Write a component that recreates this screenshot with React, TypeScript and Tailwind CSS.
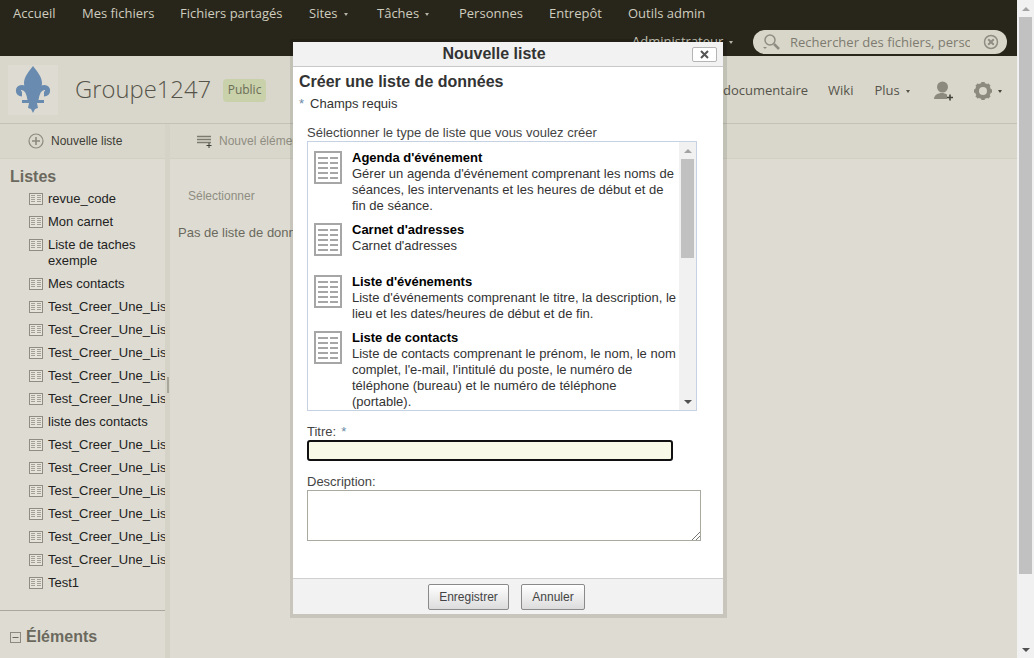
import React from "react";

const Caret = ({ c = "border-t-[#b5b3a7]" }: { c?: string }) => (
  <span className={`inline-block ml-[6px] align-middle w-0 h-0 border-x-[2.5px] border-x-transparent border-t-[3px] ${c}`} />
);

const ListIcon = () => (
  <svg width="14" height="12" viewBox="0 0 14 12" className="shrink-0">
    <rect x="0.5" y="0.5" width="13" height="11" fill="#e6e4da" stroke="#8f8d83" />
    <path d="M2 2.500h4M8 2.500h4M2 4.500h4M8 4.500h4M2 6.500h4M8 6.500h4M2 8.500h4M8 8.500h4" stroke="#a3a197" strokeWidth="1" />
  </svg>
);

const TypeIcon = () => (
  <svg width="28" height="33" viewBox="0 0 28 33" className="shrink-0 mt-[1px]">
    <rect x="1" y="1" width="26" height="31" fill="#fff" stroke="#a6a6a6" strokeWidth="2" />
    <path d="M4 7h10M16 7h8M4 12h10M16 12h8M4 17h10M16 17h8M4 22h10M16 22h8M4 27h10M16 27h8" stroke="#a6a6a6" strokeWidth="2" />
  </svg>
);

const Fleur = () => (
  <svg width="36" height="48" viewBox="0 0 36 48">
    <g fill="#6a8bb0">
      <path d="M18 0C14 5 9 11 9 17c0 6 4 11 6.500 17h5C23 28 27 23 27 17 27 11 22 5 18 0z" />
      <rect x="7" y="34" width="22" height="3" />
      <path d="M14 37h8l1 5-3 1-2 4-2-4-3-1z" />
    </g>
    <g fill="none" stroke="#6a8bb0" strokeWidth="5">
      <path d="M15 34C14 27 11 21.500 6.500 21.500 2.500 21.500 2 28 7 28" />
      <path d="M21 34C22 27 25 21.500 29.500 21.500 33.500 21.500 34 28 29 28" />
    </g>
  </svg>
);

const names = [
  "revue_code",
  "Mon carnet",
  "Liste de taches exemple",
  "Mes contacts",
  "Test_Creer_Une_Liste",
  "Test_Creer_Une_Liste",
  "Test_Creer_Une_Liste",
  "Test_Creer_Une_Liste",
  "Test_Creer_Une_Liste",
  "liste des contacts",
  "Test_Creer_Une_Liste",
  "Test_Creer_Une_Liste",
  "Test_Creer_Une_Liste",
  "Test_Creer_Une_Liste",
  "Test_Creer_Une_Liste",
  "Test_Creer_Une_Liste",
  "Test1",
];

const types = [
  { t: "Agenda d'événement", d: "Gérer un agenda d'événement comprenant les noms de séances, les intervenants et les heures de début et de fin de séance.", h: "h-[72px]" },
  { t: "Carnet d'adresses", d: "Carnet d'adresses", h: "h-[52px]" },
  { t: "Liste d'événements", d: "Liste d'événements comprenant le titre, la description, le lieu et les dates/heures de début et de fin.", h: "h-[56px]" },
  { t: "Liste de contacts", d: "Liste de contacts comprenant le prénom, le nom, le nom complet, l'e-mail, l'intitulé du poste, le numéro de téléphone (bureau) et le numéro de téléphone (portable).", h: "h-[88px]" },
];

export default function App() {
  return (
    <div className="relative flex w-[1034px] h-[658px] overflow-hidden bg-[#dedcd2] font-['Liberation_Sans',Arial,sans-serif] text-[13px] text-[#2a2a2a]">
      <div className="flex flex-col w-[1017px] h-full">
        {/* top navigation */}
        <div className="relative h-[56px] bg-[#28251a] shrink-0 font-['Open_Sans',sans-serif] text-[13px] text-[#cfcdbf]">
          <div className="flex items-center h-[28px] pl-[13px]">
            <span className="w-[69px]">Accueil</span>
            <span className="w-[98px]">Mes fichiers</span>
            <span className="w-[129px]">Fichiers partagés</span>
            <span className="w-[68px]">Sites<Caret /></span>
            <span className="w-[82px]">Tâches<Caret /></span>
            <span className="w-[90px]">Personnes</span>
            <span className="w-[79px]">Entrepôt</span>
            <span>Outils admin</span>
          </div>
          <div className="absolute left-[632px] top-[32px]">Administrateur<Caret /></div>
          <div className="absolute left-[753px] top-[30px] flex items-center w-[254px] h-[24px] rounded-full bg-[#d8d6c9] pl-[9px] pr-[8px]">
            <svg width="20" height="18" viewBox="0 0 20 18" className="shrink-0">
              <circle cx="8" cy="7" r="5" fill="none" stroke="#8f8d83" strokeWidth="1.500" />
              <path d="M12 11l5 5" stroke="#8f8d83" strokeWidth="2.500" />
              <path d="M1 14h4l-2 2z" fill="#8f8d83" />
            </svg>
            <span className="ml-[8px] pt-[1px] w-[180px] overflow-hidden whitespace-nowrap text-[13px] text-[#7d7b70]">Rechercher des fichiers, perso</span>
            <svg width="16" height="16" viewBox="0 0 16 16" className="ml-auto shrink-0">
              <circle cx="8" cy="8" r="6.500" fill="none" stroke="#8f8d83" strokeWidth="1.500" />
              <path d="M5.200 5.200l5.600 5.600M10.800 5.200l-5.600 5.600" stroke="#8f8d83" strokeWidth="2" />
            </svg>
          </div>
        </div>

        {/* site header */}
        <div className="relative flex items-center h-[68px] shrink-0 bg-[#d9d7cb] border-b border-[#c4c2b7] pl-[8px] font-['Open_Sans',sans-serif]">
          <div className="flex items-center justify-center w-[50px] h-[50px] bg-[#dedcd2]">
            <Fleur />
          </div>
          <span className="ml-[17px] text-[23.800px] font-light text-[#55534a]">Groupe1247</span>
          <span className="ml-[12px] mt-[1px] flex items-center justify-center w-[43px] h-[23px] rounded-[4px] bg-[#c9d1aa] text-[12px] text-[#6b6e58]">Public</span>
          <div className="absolute left-[723px] top-[25px] flex items-center text-[13px] text-[#55534a]">
            <span>documentaire</span>
            <span className="ml-[20px]">Wiki</span>
            <span className="ml-[21px]">Plus<Caret c="border-t-[#55534a]" /></span>
            <svg width="20" height="20" viewBox="0 0 20 20" className="ml-[24px]">
              <circle cx="8.500" cy="6" r="5.500" fill="#8c8a7e" />
              <path d="M0 18c0-4 4-6 8-6 2 0 3 .5 5 1.500V18z" fill="#8c8a7e" />
              <path d="M16 13.500v6M13 16.500h6" stroke="#45443c" strokeWidth="1.600" />
            </svg>
            <svg width="18" height="18" viewBox="0 0 18 18" className="ml-[20px]">
              <circle cx="9" cy="9" r="6" fill="none" stroke="#8c8a7e" strokeWidth="4" />
              <path d="M9 0v3M9 15v3M0 9h3M15 9h3M2.600 2.600l2 2M13.400 13.400l2 2M15.400 2.600l-2 2M4.600 13.400l-2 2" stroke="#8c8a7e" strokeWidth="3.500" />
            </svg>
            <Caret c="border-t-[#45443c]" />
          </div>
        </div>

        {/* toolbar */}
        <div className="flex h-[35px] shrink-0 items-stretch text-[12px]">
          <div className="flex items-center w-[165px] bg-[#d9d7cb] border-b border-[#d2d0c5] pl-[28px] text-[#3d3c35]">
            <svg width="16" height="16" viewBox="0 0 16 16" className="shrink-0">
              <circle cx="8" cy="8" r="7" fill="none" stroke="#8c8a7e" strokeWidth="1.200" />
              <path d="M8 4v8M4 8h8" stroke="#8c8a7e" strokeWidth="1.600" />
            </svg>
            <span className="ml-[7px]">Nouvelle liste</span>
          </div>
          <div className="w-[5px] bg-[#d5d3c8]" />
          <div className="flex flex-1 items-center bg-[#d9d7cb] border-b border-[#d2d0c5] pl-[27px] text-[#8f8d82]">
            <svg width="16" height="14" viewBox="0 0 16 14" className="shrink-0">
              <path d="M0 2.500h14M0 5.500h14M0 8.500h14" stroke="#7d7b70" strokeWidth="1.400" />
              <path d="M12 9v5M9.500 11.500h5" stroke="#3d3c35" strokeWidth="1" />
            </svg>
            <span className="ml-[6px]">Nouvel élément</span>
          </div>
        </div>

        {/* body */}
        <div className="flex flex-1 min-h-0">
          <div className="w-[165px] shrink-0 flex flex-col overflow-hidden">
            <div className="pl-[10px] pt-[8px] text-[16px] leading-[20px] font-bold text-[#6b695e]">Listes</div>
            <div className="mt-[1px] flex flex-col">
              {names.map((n, i) => (
                <div key={i} className="flex items-start pl-[29px] pt-[3px] pb-[4px] leading-[16px] text-[#222]">
                  <span className="mt-[2px]"><ListIcon /></span>
                  <span className={i === 2 ? "ml-[5px] w-[100px]" : "ml-[5px] whitespace-nowrap"}>{n}</span>
                </div>
              ))}
            </div>
            <div className="mt-[15px] border-t border-[#aaa89d] pt-[16px] pl-[10px] flex items-center">
              <svg width="11" height="11" viewBox="0 0 11 11" className="shrink-0">
                <rect x="0.5" y="0.5" width="10" height="10" fill="none" stroke="#8c8a7e" />
                <path d="M2.500 5.500h6" stroke="#6b695e" />
              </svg>
              <span className="ml-[5px] text-[16px] leading-[20px] font-bold text-[#6b695e]">Éléments</span>
            </div>
          </div>
          <div className="relative w-[5px] bg-[#d5d3c8] shrink-0">
            <div className="absolute top-[218px] left-[2px] w-[2px] h-[16px] bg-[#a9a79c]" />
          </div>
          <div className="flex-1 pl-[8px] overflow-hidden">
            <div className="pl-[10px] pt-[28px] text-[12px] text-[#8f8d82]">Sélectionner</div>
            <div className="mt-[18px] text-[#6b695e] whitespace-nowrap">Pas de liste de données</div>
          </div>
        </div>
      </div>

      {/* page scrollbar */}
      <div className="flex flex-col w-[17px] h-full bg-[#f1f1f1]">
        <div className="flex items-center justify-center h-[17px]">
          <span className="w-0 h-0 border-x-[4px] border-x-transparent border-b-[4px] border-b-[#a3a3a3]" />
        </div>
        <div className="ml-[2px] mr-[2px] h-[557px] bg-[#c1c1c1]" />
        <div className="mt-auto flex items-center justify-center h-[17px]">
          <span className="w-0 h-0 border-x-[4px] border-x-transparent border-t-[4px] border-t-[#505050]" />
        </div>
      </div>

      {/* dialog */}
      <div className="absolute left-[290px] top-[39px] w-[437px] h-[579px] border-black/10 border-t-[3px] border-l-[3px] border-r-[4px] border-b-[4px]">
        <div className="flex flex-col w-full h-full bg-white">
          <div className="relative flex items-center justify-center pr-[28px] h-[25px] shrink-0 bg-[#f2f2f2] border-b border-[#c8c8c8] text-[16px] font-bold text-[#333]">
            Nouvelle liste
            <div className="absolute right-[6px] top-[5px] flex items-center justify-center w-[25px] h-[15px] bg-white border border-[#b5b5b5] rounded-[2px]">
              <svg width="9" height="9" viewBox="0 0 9 9">
                <path d="M1 1l7 7M8 1l-7 7" stroke="#555" strokeWidth="2" />
              </svg>
            </div>
          </div>
          <div className="flex-1 min-h-0 pl-[6px]">
            <div className="mt-[5px] text-[16px] leading-[20px] font-bold text-[#333]">Créer une liste de données</div>
            <div className="mt-[2px] leading-[20px] text-[#333]">
              <span className="text-[#6b8aa8]">*</span>
              <span className="ml-[6px]">Champs requis</span>
            </div>
            <div className="mt-[11px] ml-[8px] leading-[16px] text-[#444]">Sélectionner le type de liste que vous voulez créer</div>
            <div className="ml-[8px] flex w-[390px] h-[270px] border border-[#c6d2e3] overflow-hidden">
              <div className="flex-1 min-w-0 pt-[8px] pl-[6px]">
                {types.map((x) => (
                  <div key={x.t} className={`flex shrink-0 ${x.h}`}>
                    <TypeIcon />
                    <div className="ml-[10px] w-[326px] leading-[16px] text-[#333]">
                      <div className="font-bold text-black">{x.t}</div>
                      <div>{x.d}</div>
                    </div>
                  </div>
                ))}
              </div>
              <div className="flex flex-col w-[17px] shrink-0 bg-[#f1f1f1]">
                <div className="flex items-center justify-center h-[17px]">
                  <span className="w-0 h-0 border-x-[4px] border-x-transparent border-b-[4px] border-b-[#a3a3a3]" />
                </div>
                <div className="mx-[2px] h-[99px] bg-[#c1c1c1]" />
                <div className="mt-auto flex items-center justify-center h-[17px]">
                  <span className="w-0 h-0 border-x-[4px] border-x-transparent border-t-[4px] border-t-[#505050]" />
                </div>
              </div>
            </div>
            <div className="mt-[13px] ml-[8px] leading-[16px] text-[#444]">
              Titre:<span className="ml-[5px] text-[#6b8aa8]">*</span>
            </div>
            <div className="ml-[8px] w-[366px] h-[21px] rounded-[3px] border-2 border-[#111] bg-[#f8f9e6]" />
            <div className="mt-[13px] ml-[8px] leading-[16px] text-[#444]">Description:</div>
            <div className="relative ml-[8px] w-[394px] h-[51px] border border-[#a9a99f] bg-white">
              <svg width="9" height="9" viewBox="0 0 9 9" className="absolute right-0 bottom-0">
                <path d="M1 9l8-8M5 9l4-4" stroke="#777" strokeWidth="1" />
              </svg>
            </div>
          </div>
          <div className="flex items-center justify-center gap-[12px] pr-[3px] h-[36px] shrink-0 bg-[#f2f2f2] border-t border-[#cfcfcf] text-[12px]">
            <div className="flex items-center justify-center w-[81px] h-[26px] rounded-[2px] border border-[#8a8a8a] bg-gradient-to-b from-[#ffffff] to-[#dcdcdc] text-[#444]">Enregistrer</div>
            <div className="flex items-center justify-center w-[64px] h-[26px] rounded-[2px] border border-[#8a8a8a] bg-gradient-to-b from-[#ffffff] to-[#dcdcdc] text-[#444]">Annuler</div>
          </div>
        </div>
      </div>
    </div>
  );
}
